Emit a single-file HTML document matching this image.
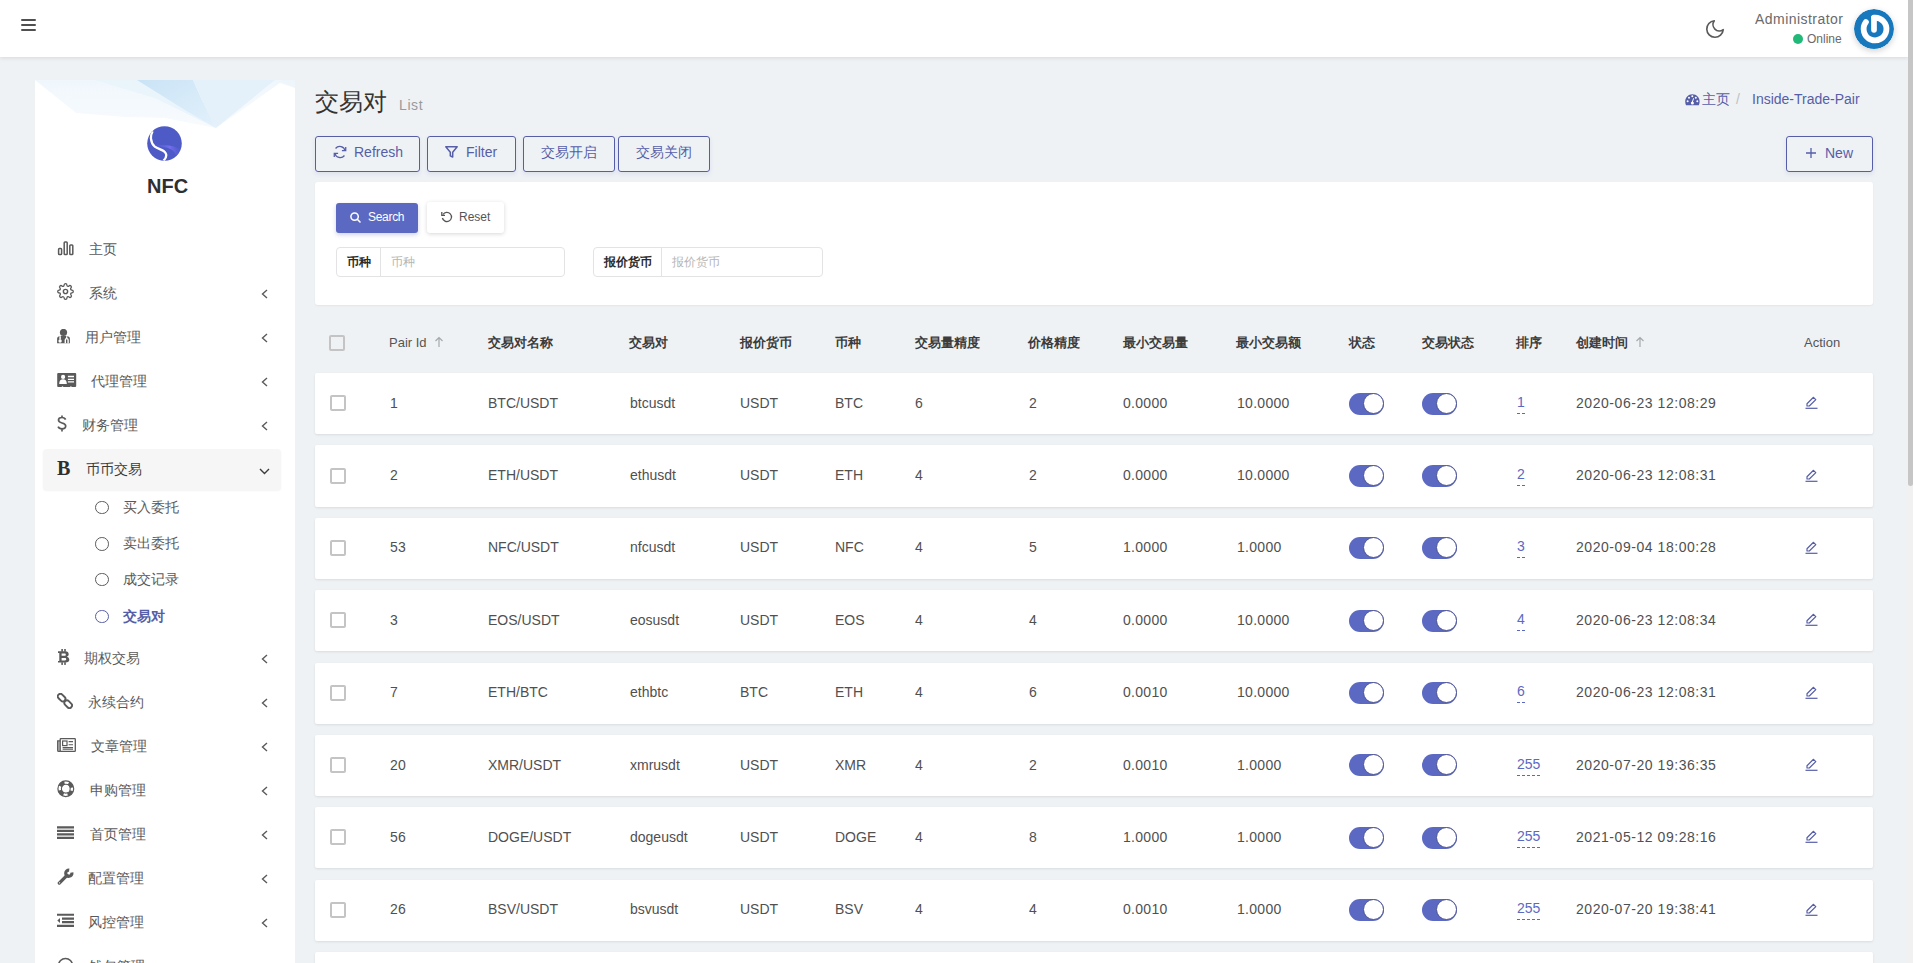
<!DOCTYPE html><html><head><meta charset="utf-8"><title>交易对</title><style>
*{box-sizing:border-box}
html,body{margin:0;padding:0}
body{width:1913px;height:963px;overflow:hidden;background:#eef2f5;position:relative;
 font-family:"Liberation Sans",sans-serif;color:#4b4b4b}
.a{position:absolute;white-space:nowrap}
.t{position:absolute;white-space:nowrap;line-height:20px;height:20px}
#sb{position:absolute;left:1908px;top:0;width:5px;height:963px;background:#f1f1f1}
#sbt{position:absolute;left:1908px;top:0;width:5px;height:486px;background:#c6c6c6;border-radius:0 0 3px 3px}
#nav{position:absolute;left:0;top:0;width:1908px;height:57px;background:#fff;box-shadow:0 1px 4px rgba(40,40,60,.12)}
.ham{position:absolute;left:21px;width:14.5px;height:2.5px;background:#505050;border-radius:1px}
#side{position:absolute;left:35px;top:80px;width:260px;height:900px;background:#fff;overflow:hidden}
.mi{position:absolute;font-size:14px;color:#5c5c5c}
.ico{position:absolute}
.chev{position:absolute;left:261px;width:7px;height:10px}
.btn{position:absolute;top:136px;height:35.5px;border:1px solid #565ea8;border-radius:3px;color:#565ea8;font-size:14px;
 box-shadow:0 2px 4px rgba(60,70,150,.10)}
.card{position:absolute;background:#fff;border-radius:3px;box-shadow:0 1px 2px rgba(0,0,0,.05)}
.row{position:absolute;left:315px;width:1558px;height:61.2px;background:#fff;border-radius:2px;
 box-shadow:0 1px 2.5px rgba(0,0,0,.09)}
.cb{position:absolute;width:16px;height:16px;border:2px solid #c4c4c4;border-radius:2px;background:#fff}
.hd{position:absolute;top:333px;font-size:13px;font-weight:bold;color:#3c3c3c;line-height:20px}
.cell{position:absolute;font-size:14px;color:#505050;line-height:20px}
.tog{position:absolute;width:35px;height:22px;border-radius:11px;background:#5b69c3}
.tog:after{content:"";position:absolute;right:0;top:0;width:21px;height:21px;border-radius:50%;background:#fff;
 border:1px solid #4d548f;box-sizing:border-box}
.lnk{position:absolute;font-size:14px;color:#5b69c3;line-height:19px;padding-bottom:1px;border-bottom:1px dashed #5b69c3}
</style></head><body>
<div id="nav">
<div class="ham" style="top:18.8px"></div>
<div class="ham" style="top:23.7px"></div>
<div class="ham" style="top:28.6px"></div>
<svg class="a" style="left:1704px;top:18px" width="22" height="22" viewBox="0 0 24 24"><path d="M21 12.79A9 9 0 1 1 11.21 3 7 7 0 0 0 21 12.79z" fill="none" stroke="#5a5a5a" stroke-width="1.8" stroke-linejoin="round"/></svg>
<div class="t" style="left:1755px;top:9px;font-size:14px;color:#6a6a6a;letter-spacing:.45px">Administrator</div>
<div class="a" style="left:1793px;top:34px;width:10px;height:10px;border-radius:50%;background:#21b978"></div>
<div class="t" style="left:1807px;top:29px;font-size:12px;color:#6a6a6a">Online</div>
<svg class="a" style="left:1854px;top:9px;border-radius:50%;box-shadow:0 2px 6px rgba(0,0,0,.18)" width="40" height="40" viewBox="-20 -20 40 40"><circle r="20" fill="#1878bd"/><path d="M-8.06 -6.9 A11.4 11.4 0 1 0 0 -11.4" fill="none" stroke="#fff" stroke-width="5.8" stroke-linecap="round"/><path d="M0 -11.2 V0.8" stroke="#fff" stroke-width="5.7" stroke-linecap="round"/></svg>
</div>
<div id="side">
<svg class="a" style="left:0;top:0" width="260" height="60" viewBox="0 0 260 60"><defs><linearGradient id="g1" x1="0" y1="0" x2="1" y2="1"><stop offset="0" stop-color="#c9e3f6"/><stop offset="1" stop-color="#e3f1fb"/></linearGradient><linearGradient id="g2" x1="0" y1="0" x2="0" y2="1"><stop offset="0" stop-color="#f0f7fc"/><stop offset="1" stop-color="#f8fbfe"/></linearGradient></defs><polygon points="0,0 260,0 260,8 245,3 181,48 130,38 90,37 41,33" fill="url(#g2)"/><polygon points="60,0 150,0 170,25 181,48 120,18" fill="#e9f4fb"/><polygon points="102,0 158,0 166,18 181,48 150,30" fill="url(#g1)"/><polygon points="158,0 240,0 181,48 166,18" fill="#e4f1fa"/><polygon points="245,0 260,0 260,8" fill="#eef6fb"/></svg>
<svg class="a" style="left:112px;top:46px" width="35" height="35" viewBox="0 0 35 35"><defs><clipPath id="lc"><circle cx="17.5" cy="17.5" r="17.3"/></clipPath><linearGradient id="lg" x1="0" y1="0" x2="1" y2="0"><stop offset="0" stop-color="#5b5fd8" stop-opacity="0"/><stop offset=".6" stop-color="#7470ee"/><stop offset="1" stop-color="#5a5fd6" stop-opacity=".3"/></linearGradient></defs><circle cx="17.5" cy="17.5" r="17.3" fill="#4e5ac6"/><g clip-path="url(#lc)"><path d="M6 17.5 C10 21.5 16 20.5 21 22 C26 23.5 28.5 27 29.5 31 C31.5 29 33 26.5 33.5 24 C28 19.5 21 19.5 15 19 C11 18.7 8 18.5 6 17.5z" fill="url(#lg)"/><path d="M5.6 5.2 C3.2 9.5 3 16.5 7.8 20.6 C11.5 23.6 17 23.2 18.9 27.6 C19.7 29.8 18.9 32.3 16.6 34.6" fill="none" stroke="#fff" stroke-width="2.3"/></g></svg>
<div class="t" style="left:112px;top:93.5px;font-size:20px;font-weight:bold;color:#2e2e33;line-height:24px;height:24px">NFC</div>
</div>
<div class="a" style="left:43px;top:449px;width:238px;height:41px;background:#f6f6f6;border-radius:4px;box-shadow:0 1px 2px rgba(0,0,0,.05)"></div>
<svg class="ico" style="left:57px;top:240.7px" width="17" height="15" viewBox="0 0 17 15"><rect x="1.6" y="7.6" width="3" height="5.9" rx="0.8" fill="none" stroke="#5a5a5a" stroke-width="1.5"/><rect x="7.2" y="0.9" width="3" height="12.6" rx="0.8" fill="none" stroke="#5a5a5a" stroke-width="1.5"/><rect x="12.8" y="3.9" width="3" height="9.6" rx="0.8" fill="none" stroke="#5a5a5a" stroke-width="1.5"/></svg>
<div class="t mi" style="left:88.6px;top:238.5px;color:#5a5a5a">主页</div>
<svg class="ico" style="left:57px;top:283px" width="17" height="17" viewBox="0 0 24 24"><circle cx="12" cy="12" r="3" fill="none" stroke="#5a5a5a" stroke-width="2"/><path d="M19.4 15a1.65 1.65 0 0 0 .33 1.82l.06.06a2 2 0 0 1-2.83 2.83l-.06-.06a1.65 1.65 0 0 0-1.82-.33 1.65 1.65 0 0 0-1 1.51V21a2 2 0 0 1-4 0v-.09A1.65 1.65 0 0 0 9 19.4a1.65 1.65 0 0 0-1.82.33l-.06.06a2 2 0 0 1-2.83-2.83l.06-.06A1.65 1.65 0 0 0 4.68 15a1.65 1.65 0 0 0-1.51-1H3a2 2 0 0 1 0-4h.09A1.65 1.65 0 0 0 4.6 9a1.650 1.65 0 0 0-.33-1.82l-.06-.06a2 2 0 0 1 2.83-2.83l.06.06A1.65 1.65 0 0 0 9 4.68a1.65 1.65 0 0 0 1-1.51V3a2 2 0 0 1 4 0v.09a1.65 1.65 0 0 0 1 1.51 1.65 1.65 0 0 0 1.82-.33l.06-.06a2 2 0 0 1 2.83 2.83l-.06.06A1.65 1.65 0 0 0 19.4 9a1.65 1.65 0 0 0 1.51 1H21a2 2 0 0 1 0 4h-.09a1.65 1.65 0 0 0-1.51 1z" fill="none" stroke="#5a5a5a" stroke-width="1.8"/></svg>
<div class="t mi" style="left:88.6px;top:282.5px;color:#5a5a5a">系统</div>
<svg class="chev" style="top:288.5px" viewBox="0 0 7 10"><path d="M6 1 L1.5 5 L6 9" fill="none" stroke="#5a5a5a" stroke-width="1.4"/></svg>
<svg class="ico" style="left:57px;top:328.5px" width="14" height="15" viewBox="0 0 14 15"><circle cx="6.5" cy="3.5" r="3.6" fill="#5a5a5a"/><path d="M0.1 14.3 V9.8 C0.1 7.9 1.6 7.1 4 7.1 H9 C11.4 7.1 12.9 7.9 12.9 9.8 V14.3z" fill="#5a5a5a"/><path d="M3.1 7.3 V10.6" stroke="#fff" stroke-width="1.5"/><circle cx="3.1" cy="12" r="1.7" fill="#fff"/><path d="M8.3 14.3 V11 C8.3 9.2 11.1 9.2 11.1 11 V14.3" fill="none" stroke="#fff" stroke-width="1.4"/><path d="M9.7 7.3 V9.7" stroke="#fff" stroke-width="1.3"/></svg>
<div class="t mi" style="left:85px;top:326.5px;color:#5a5a5a">用户管理</div>
<svg class="chev" style="top:332.5px" viewBox="0 0 7 10"><path d="M6 1 L1.5 5 L6 9" fill="none" stroke="#5a5a5a" stroke-width="1.4"/></svg>
<svg class="ico" style="left:57px;top:372.8px" width="20" height="15" viewBox="0 0 20 15"><rect x="0.2" y="0" width="19" height="14" rx="1" fill="#5a5a5a"/><circle cx="6.1" cy="3.9" r="2.1" fill="#fff"/><path d="M2.2 10.9 C2.2 7.6 3.8 6.3 6 6.3 C8.2 6.3 9.8 7.6 9.8 10.9z" fill="#fff"/><path d="M10.9 3.5 H17 M10.9 6.3 H17 M10.9 8.8 H17" stroke="#fff" stroke-width="1.3"/><circle cx="5.5" cy="14" r="0.8" fill="#fff"/><circle cx="13.9" cy="14" r="0.8" fill="#fff"/></svg>
<div class="t mi" style="left:91px;top:370.5px;color:#5a5a5a">代理管理</div>
<svg class="chev" style="top:376.5px" viewBox="0 0 7 10"><path d="M6 1 L1.5 5 L6 9" fill="none" stroke="#5a5a5a" stroke-width="1.4"/></svg>
<svg class="ico" style="left:57px;top:415px" width="10" height="17" viewBox="0 0 10 17"><path d="M8.6 4.6 C8.1 3.2 6.9 2.5 5 2.5 C2.9 2.5 1.5 3.5 1.5 5.1 C1.5 6.9 3 7.5 5 8 C7.2 8.5 8.7 9.2 8.7 11.1 C8.7 12.9 7.2 13.9 5 13.9 C3 13.9 1.7 13.1 1.1 11.7 M5 0.4 V2.5 M5 13.9 V16.4" fill="none" stroke="#5a5a5a" stroke-width="1.7"/></svg>
<div class="t mi" style="left:81.5px;top:414.5px;color:#5a5a5a">财务管理</div>
<svg class="chev" style="top:420.5px" viewBox="0 0 7 10"><path d="M6 1 L1.5 5 L6 9" fill="none" stroke="#5a5a5a" stroke-width="1.4"/></svg>
<div class="ico" style="left:57px;top:456.5px;font-family:'Liberation Serif',serif;font-size:20px;font-weight:bold;color:#2f2f2f;line-height:22px">B</div>
<div class="t mi" style="left:85.7px;top:459.0px;color:#3a3a3a">币币交易</div>
<svg class="a" style="left:259px;top:468.0px" width="11" height="7" viewBox="0 0 11 7"><path d="M1 1 L5.5 5.5 L10 1" fill="none" stroke="#3c3c3c" stroke-width="1.4"/></svg>
<svg class="ico" style="left:57.5px;top:649px" width="12" height="16" viewBox="0 0 12 16"><path fill-rule="evenodd" fill="#5a5a5a" d="M0 2.3 H7.2 C9.6 2.3 10.7 3.6 10.7 5.3 C10.7 6.6 9.9 7.4 8.9 7.8 C10.3 8.2 11.3 9.2 11.3 10.8 C11.3 12.6 9.9 13.6 7.6 13.6 H0 V12 H1.3 V3.9 H0z M3.6 4.5 V6.8 H6.6 C7.4 6.8 7.8 6.3 7.8 5.65 C7.8 5 7.4 4.5 6.6 4.5z M3.6 9.1 V11.4 H7 C7.8 11.4 8.2 10.9 8.2 10.25 C8.2 9.6 7.8 9.1 7 9.1z"/><rect x="3.3" y="0" width="1.6" height="2.6" fill="#5a5a5a"/><rect x="6.2" y="0" width="1.6" height="2.6" fill="#5a5a5a"/><rect x="3.3" y="13.3" width="1.6" height="2.6" fill="#5a5a5a"/><rect x="6.2" y="13.3" width="1.6" height="2.6" fill="#5a5a5a"/></svg>
<div class="t mi" style="left:84px;top:647.5px;color:#5a5a5a">期权交易</div>
<svg class="chev" style="top:653.5px" viewBox="0 0 7 10"><path d="M6 1 L1.5 5 L6 9" fill="none" stroke="#5a5a5a" stroke-width="1.4"/></svg>
<svg class="ico" style="left:57px;top:692.5px" width="16" height="16" viewBox="0 0 16 16"><rect x="-4.3" y="-2.6" width="8.6" height="5.2" rx="2.6" transform="translate(4.6 4.6) rotate(45)" fill="none" stroke="#5a5a5a" stroke-width="1.9"/><rect x="-4.3" y="-2.6" width="8.6" height="5.2" rx="2.6" transform="translate(11.2 11.2) rotate(45)" fill="none" stroke="#5a5a5a" stroke-width="1.9"/></svg>
<div class="t mi" style="left:87.5px;top:691.5px;color:#5a5a5a">永续合约</div>
<svg class="chev" style="top:697.5px" viewBox="0 0 7 10"><path d="M6 1 L1.5 5 L6 9" fill="none" stroke="#5a5a5a" stroke-width="1.4"/></svg>
<svg class="ico" style="left:57px;top:738px" width="19" height="14" viewBox="0 0 19 14"><rect x="3.2" y="0.7" width="15.1" height="12.6" rx="0.6" fill="none" stroke="#5a5a5a" stroke-width="1.3"/><path d="M3.2 2.8 H0.7 V12.4 C0.7 13 1.2 13.3 1.7 13.3 H3.2" fill="none" stroke="#5a5a5a" stroke-width="1.3"/><path d="M2 3 V13" stroke="#5a5a5a" stroke-width="0.8"/><rect x="5.6" y="3" width="4.4" height="4.6" fill="none" stroke="#5a5a5a" stroke-width="1.2"/><path d="M11.6 3.6 H16 M11.6 6.8 H16 M5.6 9.6 H16 M5.6 11.3 H16" stroke="#5a5a5a" stroke-width="1.1"/></svg>
<div class="t mi" style="left:91px;top:735.5px;color:#5a5a5a">文章管理</div>
<svg class="chev" style="top:741.5px" viewBox="0 0 7 10"><path d="M6 1 L1.5 5 L6 9" fill="none" stroke="#5a5a5a" stroke-width="1.4"/></svg>
<svg class="ico" style="left:56.5px;top:780px" width="18" height="18" viewBox="0 0 18 18"><circle cx="8.8" cy="8.7" r="7.9" fill="none" stroke="#5a5a5a" stroke-width="1.2"/><circle cx="8.8" cy="8.7" r="4.4" fill="none" stroke="#5a5a5a" stroke-width="1.1"/><circle cx="8.8" cy="8.7" r="6.1" fill="none" stroke="#5a5a5a" stroke-width="3.5" stroke-dasharray="5.4 4.18" stroke-dashoffset="-2.09"/></svg>
<div class="t mi" style="left:89.6px;top:779.5px;color:#5a5a5a">申购管理</div>
<svg class="chev" style="top:785.5px" viewBox="0 0 7 10"><path d="M6 1 L1.5 5 L6 9" fill="none" stroke="#5a5a5a" stroke-width="1.4"/></svg>
<svg class="ico" style="left:57px;top:826px" width="17" height="13" viewBox="0 0 17 13"><path d="M0 1.3 H17 M0 4.8 H17 M0 8.3 H17 M0 11.8 H17" stroke="#5a5a5a" stroke-width="2.2"/></svg>
<div class="t mi" style="left:89.6px;top:823.5px;color:#5a5a5a">首页管理</div>
<svg class="chev" style="top:829.5px" viewBox="0 0 7 10"><path d="M6 1 L1.5 5 L6 9" fill="none" stroke="#5a5a5a" stroke-width="1.4"/></svg>
<svg class="ico" style="left:57px;top:868px" width="17" height="17" viewBox="0 0 17 17"><path d="M10 7.4 L2.3 15.1" stroke="#5a5a5a" stroke-width="3.3" stroke-linecap="round"/><circle cx="2.6" cy="14.8" r="0.65" fill="#fff"/><path d="M14.85 4.5 A3.1 3.1 0 1 1 12.2 2.1" fill="none" stroke="#5a5a5a" stroke-width="3.2"/></svg>
<div class="t mi" style="left:87.8px;top:867.5px;color:#5a5a5a">配置管理</div>
<svg class="chev" style="top:873.5px" viewBox="0 0 7 10"><path d="M6 1 L1.5 5 L6 9" fill="none" stroke="#5a5a5a" stroke-width="1.4"/></svg>
<svg class="ico" style="left:57px;top:913px" width="17" height="15" viewBox="0 0 17 15"><path d="M0 1.7 H17 M5 5.6 H17 M5 9.1 H17 M0 12.9 H17" stroke="#5a5a5a" stroke-width="2.1"/><path d="M3 4.9 V10 L0.3 7.45z" fill="#5a5a5a"/></svg>
<div class="t mi" style="left:88.3px;top:911.5px;color:#5a5a5a">风控管理</div>
<svg class="chev" style="top:917.5px" viewBox="0 0 7 10"><path d="M6 1 L1.5 5 L6 9" fill="none" stroke="#5a5a5a" stroke-width="1.4"/></svg>
<svg class="ico" style="left:57px;top:957px" width="17" height="17" viewBox="0 0 17 17"><circle cx="8.5" cy="8.5" r="7" fill="none" stroke="#5a5a5a" stroke-width="1.6"/></svg>
<div class="t mi" style="left:89px;top:955.5px;color:#5a5a5a">钱包管理</div>
<div class="a" style="left:95px;top:500.7px;width:13.6px;height:13.6px;border-radius:50%;border:1.5px solid #5a5a5a"></div>
<div class="t mi" style="left:123px;top:497.0px;color:#5a5a5a;font-weight:normal">买入委托</div>
<div class="a" style="left:95px;top:537.0px;width:13.6px;height:13.6px;border-radius:50%;border:1.5px solid #5a5a5a"></div>
<div class="t mi" style="left:123px;top:533.3px;color:#5a5a5a;font-weight:normal">卖出委托</div>
<div class="a" style="left:95px;top:572.8000000000001px;width:13.6px;height:13.6px;border-radius:50%;border:1.5px solid #5a5a5a"></div>
<div class="t mi" style="left:123px;top:569.1px;color:#5a5a5a;font-weight:normal">成交记录</div>
<div class="a" style="left:95px;top:609.7px;width:13.6px;height:13.6px;border-radius:50%;border:1.5px solid #565ea8"></div>
<div class="t mi" style="left:123px;top:606.0px;color:#565ea8;font-weight:bold">交易对</div>
<div class="t" style="left:315px;top:88px;font-size:24px;color:#333;line-height:28px;height:28px">交易对</div>
<div class="t" style="left:399px;top:95px;font-size:14px;color:#9a9a9a;letter-spacing:.6px">List</div>
<svg class="a" style="left:1685px;top:93.8px" width="15" height="12" viewBox="0 0 15 12"><path d="M7.4 0.3 C3.2 0.3 0.2 3.6 0.2 7.6 C0.2 9 0.5 10.2 1 11.3 H13.8 C14.3 10.2 14.6 9 14.6 7.6 C14.6 3.6 11.6 0.3 7.4 0.3z" fill="#565ea8"/><circle cx="2.6" cy="7.2" r="1" fill="#fff"/><circle cx="4" cy="3.8" r="1" fill="#fff"/><circle cx="7.3" cy="2.3" r="1" fill="#fff"/><circle cx="10.8" cy="3.8" r="1" fill="#fff"/><circle cx="12.3" cy="7.2" r="1" fill="#fff"/><circle cx="7.4" cy="9" r="1.5" fill="#fff"/><path d="M7.2 8.5 L8.6 4.3" stroke="#fff" stroke-width="1"/></svg>
<div class="t" style="left:1702px;top:89px;font-size:14px;color:#565ea8">主页</div>
<div class="t" style="left:1736px;top:89px;font-size:14px;color:#c0c0c0">/</div>
<div class="t" style="left:1752px;top:89px;font-size:14px;color:#565ea8">Inside-Trade-Pair</div>
<div class="btn" style="left:315px;width:105px"></div>
<svg class="a" style="left:332px;top:145px" width="16" height="14" viewBox="0 0 24 22"><path d="M21 3 v6 h-6 M3 19 v-6 h6" fill="none" stroke="#565ea8" stroke-width="2"/><path d="M20 9 A8.5 8.5 0 0 0 5 5.5 M4 13 A8.5 8.5 0 0 0 19 16.5" fill="none" stroke="#565ea8" stroke-width="2"/></svg>
<div class="t" style="left:354px;top:141.5px;font-size:14px;color:#565ea8">Refresh</div>
<div class="btn" style="left:427px;width:89px"></div>
<svg class="a" style="left:445px;top:146px" width="13" height="12" viewBox="0 0 13 12"><path d="M0.8 0.8 H12.2 L7.7 6.2 V11 L5.3 9.8 V6.2z" fill="none" stroke="#565ea8" stroke-width="1.5" stroke-linejoin="round"/></svg>
<div class="t" style="left:466px;top:141.5px;font-size:14px;color:#565ea8">Filter</div>
<div class="btn" style="left:523px;width:92px"></div>
<div class="t" style="left:541px;top:141.5px;font-size:14px;color:#565ea8">交易开启</div>
<div class="btn" style="left:618px;width:92px"></div>
<div class="t" style="left:636px;top:141.5px;font-size:14px;color:#565ea8">交易关闭</div>
<div class="btn" style="left:1786px;width:87px"></div>
<svg class="a" style="left:1806px;top:148px" width="10" height="10" viewBox="0 0 10 10"><path d="M5 0 V10 M0 5 H10" stroke="#565ea8" stroke-width="1.3"/></svg>
<div class="t" style="left:1825px;top:143px;font-size:14px;color:#565ea8">New</div>
<div class="card" style="left:315px;top:182px;width:1558px;height:123px"></div>
<div class="a" style="left:336px;top:203px;width:82px;height:30px;background:#5b69c3;border-radius:3px;box-shadow:0 2px 4px rgba(70,80,170,.25)"></div>
<svg class="a" style="left:350px;top:212px" width="11" height="11" viewBox="0 0 11 11"><circle cx="4.6" cy="4.6" r="3.7" fill="none" stroke="#fff" stroke-width="1.5"/><path d="M7.3 7.3 L10 10" stroke="#fff" stroke-width="1.6" stroke-linecap="round"/></svg>
<div class="t" style="left:368px;top:207px;font-size:12px;color:#fff;letter-spacing:-.3px">Search</div>
<div class="a" style="left:427px;top:202px;width:77px;height:31px;background:#fff;border-radius:3px;box-shadow:0 1px 4px rgba(0,0,0,.16)"></div>
<svg class="a" style="left:441px;top:211px" width="12" height="12" viewBox="0 0 12 12"><path d="M2 3.5 A4.6 4.6 0 1 1 1.4 7" fill="none" stroke="#555" stroke-width="1.3"/><path d="M0.8 1 V4.3 H4" fill="none" stroke="#555" stroke-width="1.3"/></svg>
<div class="t" style="left:459px;top:207px;font-size:12px;color:#555">Reset</div>
<div class="a" style="left:336px;top:247px;width:229px;height:30px;border:1px solid #e3e3e3;border-radius:4px;background:#fff"></div><div class="a" style="left:380px;top:247px;width:1px;height:30px;background:#e3e3e3"></div><div class="t" style="left:347px;top:252px;font-size:12px;font-weight:bold;color:#2a2a2a">币种</div><div class="t" style="left:391px;top:252px;font-size:12px;color:#b5b5b5">币种</div>
<div class="a" style="left:593px;top:247px;width:230px;height:30px;border:1px solid #e3e3e3;border-radius:4px;background:#fff"></div><div class="a" style="left:661px;top:247px;width:1px;height:30px;background:#e3e3e3"></div><div class="t" style="left:604px;top:252px;font-size:12px;font-weight:bold;color:#2a2a2a">报价货币</div><div class="t" style="left:672px;top:252px;font-size:12px;color:#b5b5b5">报价货币</div>
<div class="cb" style="left:328.5px;top:335px;background:transparent"></div>
<div class="t" style="left:389px;top:333px;font-size:13px;color:#555">Pair Id</div>
<svg class="a" style="left:434px;top:336px" width="10" height="11" viewBox="0 0 10 11"><path d="M5 11 V1.5 M1.5 5 L5 1.5 L8.5 5" fill="none" stroke="#a8a8a8" stroke-width="1.2"/></svg>
<div class="hd" style="left:488px">交易对名称</div>
<div class="hd" style="left:629px">交易对</div>
<div class="hd" style="left:740px">报价货币</div>
<div class="hd" style="left:834.5px">币种</div>
<div class="hd" style="left:915px">交易量精度</div>
<div class="hd" style="left:1028px">价格精度</div>
<div class="hd" style="left:1122.5px">最小交易量</div>
<div class="hd" style="left:1235.5px">最小交易额</div>
<div class="hd" style="left:1348.5px">状态</div>
<div class="hd" style="left:1421.5px">交易状态</div>
<div class="hd" style="left:1516px">排序</div>
<div class="hd" style="left:1576px">创建时间</div>
<svg class="a" style="left:1635px;top:336px" width="10" height="11" viewBox="0 0 10 11"><path d="M5 11 V1.5 M1.5 5 L5 1.5 L8.5 5" fill="none" stroke="#a8a8a8" stroke-width="1.2"/></svg>
<div class="t" style="left:1804px;top:333px;font-size:13px;color:#555">Action</div>
<div class="row" style="top:373.0px"></div>
<div class="cb" style="left:329.5px;top:395.1px"></div>
<div class="cell" style="left:390px;top:392.6px;letter-spacing:.3px;">1</div>
<div class="cell" style="left:488px;top:392.6px;">BTC/USDT</div>
<div class="cell" style="left:630px;top:392.6px;">btcusdt</div>
<div class="cell" style="left:740px;top:392.6px;">USDT</div>
<div class="cell" style="left:835px;top:392.6px;">BTC</div>
<div class="cell" style="left:915px;top:392.6px;letter-spacing:.3px;">6</div>
<div class="cell" style="left:1029px;top:392.6px;letter-spacing:.3px;">2</div>
<div class="cell" style="left:1123px;top:392.6px;letter-spacing:.3px;">0.0000</div>
<div class="cell" style="left:1237px;top:392.6px;letter-spacing:.3px;">10.0000</div>
<div class="tog" style="left:1349px;top:392.5px"></div>
<div class="tog" style="left:1422px;top:392.5px"></div>
<div class="lnk" style="left:1517px;top:392.6px">1</div>
<div class="cell" style="left:1576px;top:392.6px;letter-spacing:.55px">2020-06-23 12:08:29</div>
<svg class="a" style="left:1805px;top:396.1px" width="13" height="13" viewBox="0 0 13 13"><path d="M8.5 1.3 L10.8 3.6 L4.3 10 H2 V7.7z" fill="none" stroke="#565ea8" stroke-width="1.2" stroke-linejoin="round"/><path d="M0.5 12.3 H12.5" stroke="#565ea8" stroke-width="1.2"/></svg>
<div class="row" style="top:445.4px"></div>
<div class="cb" style="left:329.5px;top:467.5px"></div>
<div class="cell" style="left:390px;top:465.0px;letter-spacing:.3px;">2</div>
<div class="cell" style="left:488px;top:465.0px;">ETH/USDT</div>
<div class="cell" style="left:630px;top:465.0px;">ethusdt</div>
<div class="cell" style="left:740px;top:465.0px;">USDT</div>
<div class="cell" style="left:835px;top:465.0px;">ETH</div>
<div class="cell" style="left:915px;top:465.0px;letter-spacing:.3px;">4</div>
<div class="cell" style="left:1029px;top:465.0px;letter-spacing:.3px;">2</div>
<div class="cell" style="left:1123px;top:465.0px;letter-spacing:.3px;">0.0000</div>
<div class="cell" style="left:1237px;top:465.0px;letter-spacing:.3px;">10.0000</div>
<div class="tog" style="left:1349px;top:464.9px"></div>
<div class="tog" style="left:1422px;top:464.9px"></div>
<div class="lnk" style="left:1517px;top:465.0px">2</div>
<div class="cell" style="left:1576px;top:465.0px;letter-spacing:.55px">2020-06-23 12:08:31</div>
<svg class="a" style="left:1805px;top:468.5px" width="13" height="13" viewBox="0 0 13 13"><path d="M8.5 1.3 L10.8 3.6 L4.3 10 H2 V7.7z" fill="none" stroke="#565ea8" stroke-width="1.2" stroke-linejoin="round"/><path d="M0.5 12.3 H12.5" stroke="#565ea8" stroke-width="1.2"/></svg>
<div class="row" style="top:517.7px"></div>
<div class="cb" style="left:329.5px;top:539.8px"></div>
<div class="cell" style="left:390px;top:537.3px;letter-spacing:.3px;">53</div>
<div class="cell" style="left:488px;top:537.3px;">NFC/USDT</div>
<div class="cell" style="left:630px;top:537.3px;">nfcusdt</div>
<div class="cell" style="left:740px;top:537.3px;">USDT</div>
<div class="cell" style="left:835px;top:537.3px;">NFC</div>
<div class="cell" style="left:915px;top:537.3px;letter-spacing:.3px;">4</div>
<div class="cell" style="left:1029px;top:537.3px;letter-spacing:.3px;">5</div>
<div class="cell" style="left:1123px;top:537.3px;letter-spacing:.3px;">1.0000</div>
<div class="cell" style="left:1237px;top:537.3px;letter-spacing:.3px;">1.0000</div>
<div class="tog" style="left:1349px;top:537.2px"></div>
<div class="tog" style="left:1422px;top:537.2px"></div>
<div class="lnk" style="left:1517px;top:537.3px">3</div>
<div class="cell" style="left:1576px;top:537.3px;letter-spacing:.55px">2020-09-04 18:00:28</div>
<svg class="a" style="left:1805px;top:540.8px" width="13" height="13" viewBox="0 0 13 13"><path d="M8.5 1.3 L10.8 3.6 L4.3 10 H2 V7.7z" fill="none" stroke="#565ea8" stroke-width="1.2" stroke-linejoin="round"/><path d="M0.5 12.3 H12.5" stroke="#565ea8" stroke-width="1.2"/></svg>
<div class="row" style="top:590.1px"></div>
<div class="cb" style="left:329.5px;top:612.2px"></div>
<div class="cell" style="left:390px;top:609.7px;letter-spacing:.3px;">3</div>
<div class="cell" style="left:488px;top:609.7px;">EOS/USDT</div>
<div class="cell" style="left:630px;top:609.7px;">eosusdt</div>
<div class="cell" style="left:740px;top:609.7px;">USDT</div>
<div class="cell" style="left:835px;top:609.7px;">EOS</div>
<div class="cell" style="left:915px;top:609.7px;letter-spacing:.3px;">4</div>
<div class="cell" style="left:1029px;top:609.7px;letter-spacing:.3px;">4</div>
<div class="cell" style="left:1123px;top:609.7px;letter-spacing:.3px;">0.0000</div>
<div class="cell" style="left:1237px;top:609.7px;letter-spacing:.3px;">10.0000</div>
<div class="tog" style="left:1349px;top:609.6px"></div>
<div class="tog" style="left:1422px;top:609.6px"></div>
<div class="lnk" style="left:1517px;top:609.7px">4</div>
<div class="cell" style="left:1576px;top:609.7px;letter-spacing:.55px">2020-06-23 12:08:34</div>
<svg class="a" style="left:1805px;top:613.2px" width="13" height="13" viewBox="0 0 13 13"><path d="M8.5 1.3 L10.8 3.6 L4.3 10 H2 V7.7z" fill="none" stroke="#565ea8" stroke-width="1.2" stroke-linejoin="round"/><path d="M0.5 12.3 H12.5" stroke="#565ea8" stroke-width="1.2"/></svg>
<div class="row" style="top:662.5px"></div>
<div class="cb" style="left:329.5px;top:684.6px"></div>
<div class="cell" style="left:390px;top:682.1px;letter-spacing:.3px;">7</div>
<div class="cell" style="left:488px;top:682.1px;">ETH/BTC</div>
<div class="cell" style="left:630px;top:682.1px;">ethbtc</div>
<div class="cell" style="left:740px;top:682.1px;">BTC</div>
<div class="cell" style="left:835px;top:682.1px;">ETH</div>
<div class="cell" style="left:915px;top:682.1px;letter-spacing:.3px;">4</div>
<div class="cell" style="left:1029px;top:682.1px;letter-spacing:.3px;">6</div>
<div class="cell" style="left:1123px;top:682.1px;letter-spacing:.3px;">0.0010</div>
<div class="cell" style="left:1237px;top:682.1px;letter-spacing:.3px;">10.0000</div>
<div class="tog" style="left:1349px;top:682.0px"></div>
<div class="tog" style="left:1422px;top:682.0px"></div>
<div class="lnk" style="left:1517px;top:682.1px">6</div>
<div class="cell" style="left:1576px;top:682.1px;letter-spacing:.55px">2020-06-23 12:08:31</div>
<svg class="a" style="left:1805px;top:685.6px" width="13" height="13" viewBox="0 0 13 13"><path d="M8.5 1.3 L10.8 3.6 L4.3 10 H2 V7.7z" fill="none" stroke="#565ea8" stroke-width="1.2" stroke-linejoin="round"/><path d="M0.5 12.3 H12.5" stroke="#565ea8" stroke-width="1.2"/></svg>
<div class="row" style="top:734.9px"></div>
<div class="cb" style="left:329.5px;top:757.0px"></div>
<div class="cell" style="left:390px;top:754.5px;letter-spacing:.3px;">20</div>
<div class="cell" style="left:488px;top:754.5px;">XMR/USDT</div>
<div class="cell" style="left:630px;top:754.5px;">xmrusdt</div>
<div class="cell" style="left:740px;top:754.5px;">USDT</div>
<div class="cell" style="left:835px;top:754.5px;">XMR</div>
<div class="cell" style="left:915px;top:754.5px;letter-spacing:.3px;">4</div>
<div class="cell" style="left:1029px;top:754.5px;letter-spacing:.3px;">2</div>
<div class="cell" style="left:1123px;top:754.5px;letter-spacing:.3px;">0.0010</div>
<div class="cell" style="left:1237px;top:754.5px;letter-spacing:.3px;">1.0000</div>
<div class="tog" style="left:1349px;top:754.4px"></div>
<div class="tog" style="left:1422px;top:754.4px"></div>
<div class="lnk" style="left:1517px;top:754.5px">255</div>
<div class="cell" style="left:1576px;top:754.5px;letter-spacing:.55px">2020-07-20 19:36:35</div>
<svg class="a" style="left:1805px;top:758.0px" width="13" height="13" viewBox="0 0 13 13"><path d="M8.5 1.3 L10.8 3.6 L4.3 10 H2 V7.7z" fill="none" stroke="#565ea8" stroke-width="1.2" stroke-linejoin="round"/><path d="M0.5 12.3 H12.5" stroke="#565ea8" stroke-width="1.2"/></svg>
<div class="row" style="top:807.2px"></div>
<div class="cb" style="left:329.5px;top:829.3px"></div>
<div class="cell" style="left:390px;top:826.8px;letter-spacing:.3px;">56</div>
<div class="cell" style="left:488px;top:826.8px;">DOGE/USDT</div>
<div class="cell" style="left:630px;top:826.8px;">dogeusdt</div>
<div class="cell" style="left:740px;top:826.8px;">USDT</div>
<div class="cell" style="left:835px;top:826.8px;">DOGE</div>
<div class="cell" style="left:915px;top:826.8px;letter-spacing:.3px;">4</div>
<div class="cell" style="left:1029px;top:826.8px;letter-spacing:.3px;">8</div>
<div class="cell" style="left:1123px;top:826.8px;letter-spacing:.3px;">1.0000</div>
<div class="cell" style="left:1237px;top:826.8px;letter-spacing:.3px;">1.0000</div>
<div class="tog" style="left:1349px;top:826.7px"></div>
<div class="tog" style="left:1422px;top:826.7px"></div>
<div class="lnk" style="left:1517px;top:826.8px">255</div>
<div class="cell" style="left:1576px;top:826.8px;letter-spacing:.55px">2021-05-12 09:28:16</div>
<svg class="a" style="left:1805px;top:830.3px" width="13" height="13" viewBox="0 0 13 13"><path d="M8.5 1.3 L10.8 3.6 L4.3 10 H2 V7.7z" fill="none" stroke="#565ea8" stroke-width="1.2" stroke-linejoin="round"/><path d="M0.5 12.3 H12.5" stroke="#565ea8" stroke-width="1.2"/></svg>
<div class="row" style="top:879.6px"></div>
<div class="cb" style="left:329.5px;top:901.7px"></div>
<div class="cell" style="left:390px;top:899.2px;letter-spacing:.3px;">26</div>
<div class="cell" style="left:488px;top:899.2px;">BSV/USDT</div>
<div class="cell" style="left:630px;top:899.2px;">bsvusdt</div>
<div class="cell" style="left:740px;top:899.2px;">USDT</div>
<div class="cell" style="left:835px;top:899.2px;">BSV</div>
<div class="cell" style="left:915px;top:899.2px;letter-spacing:.3px;">4</div>
<div class="cell" style="left:1029px;top:899.2px;letter-spacing:.3px;">4</div>
<div class="cell" style="left:1123px;top:899.2px;letter-spacing:.3px;">0.0010</div>
<div class="cell" style="left:1237px;top:899.2px;letter-spacing:.3px;">1.0000</div>
<div class="tog" style="left:1349px;top:899.1px"></div>
<div class="tog" style="left:1422px;top:899.1px"></div>
<div class="lnk" style="left:1517px;top:899.2px">255</div>
<div class="cell" style="left:1576px;top:899.2px;letter-spacing:.55px">2020-07-20 19:38:41</div>
<svg class="a" style="left:1805px;top:902.7px" width="13" height="13" viewBox="0 0 13 13"><path d="M8.5 1.3 L10.8 3.6 L4.3 10 H2 V7.7z" fill="none" stroke="#565ea8" stroke-width="1.2" stroke-linejoin="round"/><path d="M0.5 12.3 H12.5" stroke="#565ea8" stroke-width="1.2"/></svg>
<div class="row" style="top:952.0px"></div>
<div id="sb"></div><div id="sbt"></div>
</body></html>
